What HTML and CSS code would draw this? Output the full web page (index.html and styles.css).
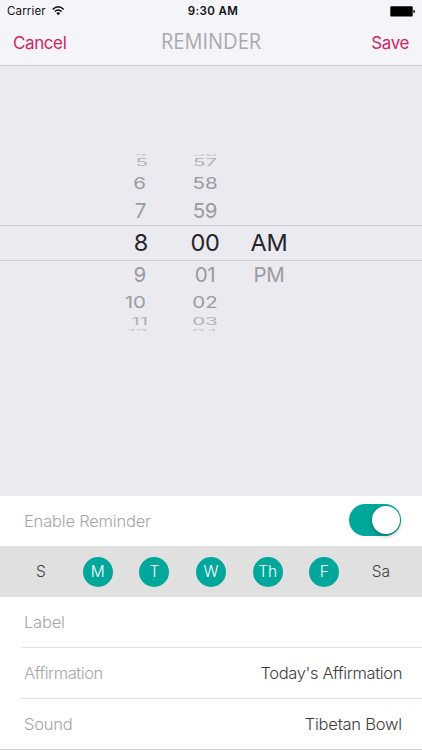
FILE: index.html
```html
<!DOCTYPE html>
<html lang="en">
<head>
  <meta charset="UTF-8">
  <title>Reminder</title>
  <link rel="stylesheet" href="styles.css">
</head>
<body>
  <div class="status-bar">
    <div class="carrier">
      <span>Carrier</span>
      <svg class="wifi" width="12.5" height="9.6" viewBox="0 0 13 10">
        <path d="M0.8 3.5Q6.5 -1.7 12.2 3.5M2.9 5.8Q6.5 2.6 10.1 5.8" fill="none" stroke="#000" stroke-width="1.5"/>
        <path d="M4.4 7.3Q6.5 5.6 8.6 7.3L6.5 9.6Z"/>
      </svg>
    </div>
    <div class="time">9:30 AM</div>
    <svg class="battery" width="26" height="11" viewBox="0 0 26 11">
      <rect x="0.3" y="0.3" width="22.4" height="10.2" rx="1"/>
      <path d="M23.5 3.8h0.5q1 0.5 1 1.6t-1 1.6h-0.5z"/>
    </svg>
  </div>

  <div class="nav-bar">
    <a class="nav-link cancel">Cancel</a>
    <h1 class="title"><span class="title-text">REMINDER</span></h1>
    <a class="nav-link save">Save</a>
  </div>

  <div class="picker">
    <div class="wheel hours">
      <span class="edge">4</span>
      <span class="far">5</span>
      <span class="mid">6</span>
      <span class="near">7</span>
      <span class="selected">8</span>
      <span class="near">9</span>
      <span class="mid">10</span>
      <span class="far">11</span>
      <span class="edge">12</span>
    </div>
    <div class="wheel minutes">
      <span class="edge">56</span>
      <span class="far">57</span>
      <span class="mid">58</span>
      <span class="near">59</span>
      <span class="selected">00</span>
      <span class="near">01</span>
      <span class="mid">02</span>
      <span class="far">03</span>
      <span class="edge">04</span>
    </div>
    <div class="wheel period">
      <span></span>
      <span></span>
      <span></span>
      <span></span>
      <span class="selected">AM</span>
      <span class="near">PM</span>
    </div>
    <div class="picker-band"></div>
  </div>

  <div class="row enable">
    <span class="label">Enable Reminder</span>
    <div class="switch"><div class="knob"></div></div>
  </div>

  <div class="days">
    <span class="day">S</span>
    <span class="day on">M</span>
    <span class="day on">T</span>
    <span class="day on">W</span>
    <span class="day on">Th</span>
    <span class="day on">F</span>
    <span class="day">Sa</span>
  </div>

  <div class="settings">
    <div class="row">
      <span class="label">Label</span>
    </div>
    <div class="row">
      <span class="label affirmation">Affirmation</span>
      <span class="value today">Today's Affirmation</span>
    </div>
    <div class="row">
      <span class="label">Sound</span>
      <span class="value">Tibetan Bowl</span>
    </div>
  </div>
</body>
</html>
```
FILE: styles.css
```css
* {
  box-sizing: border-box;
}
body {
  margin: 0;
  width: 422px;
  height: 750px;
  overflow: hidden;
  background: #fff;
  color: #3c3c3e;
  font-family: Inter, "Liberation Sans", sans-serif;
}
.status-bar {
  display: grid;
  grid-template-columns: 1fr auto 1fr;
  align-items: center;
  height: 22px;
  padding: 0 6px 0 7px;
  background: #f5f4f9;
  color: #111;
  font-size: 11.5px;
}
.carrier {
  display: flex;
  align-items: center;
  gap: 6px;
  letter-spacing: 0.15px;
}
.time {
  font-weight: 600;
  letter-spacing: 0.4px;
  margin-left: 3px;
}
.battery {
  justify-self: end;
}
.nav-bar {
  display: grid;
  grid-template-columns: 1fr auto 1fr;
  align-items: center;
  height: 44px;
  padding: 0 13px 2px;
  background: #f5f4f9;
  border-bottom: 1px solid #cbcad0;
}
.nav-link {
  color: #d02560;
  font-size: 17px;
  letter-spacing: -0.4px;
}
.save {
  justify-self: end;
}
.title {
  display: flex;
  justify-content: center;
  width: 100px;
  margin: 0 0 5px;
  font: 400 22px/36px "Open Sans", sans-serif;
  color: #a9a8ac;
}
.title-text {
  transform: scaleX(0.91);
}
.picker {
  position: relative;
  display: grid;
  grid-template-columns: 65px 64px 64px;
  height: 430px;
  padding: 84px 0 0 108px;
  background: #ebeaf0;
}
.picker-band {
  position: absolute;
  left: 0;
  right: 0;
  top: 159px;
  height: 36px;
  border-top: 1px solid #cfced3;
  border-bottom: 1px solid #cfced3;
}
.wheel {
  display: grid;
  grid-template-rows: 8px 10px 30px 26px 38px 26px 28px 11px 8px;
  align-content: start;
  justify-items: center;
  align-items: center;
  font-size: 20.5px;
  line-height: 26px;
  color: #9b9a9f;
}
.hours {
  justify-items: end;
  padding-right: 25px;
}
.hours span {
  transform-origin: right center;
}
.hours .near,
.hours .mid {
  margin-right: 2px;
}
.wheel .selected {
  font-size: 23.5px;
  letter-spacing: -0.3px;
  color: #252528;
}
.near {
  letter-spacing: -0.3px;
}
.mid {
  transform: scaleY(0.79);
}
.far {
  color: #b2b1b6;
  transform: scaleY(0.47);
}
.edge {
  color: #c6c5ca;
  transform: scaleY(0.22);
}
/* the outermost numbers roll out of sight halfway */
.edge:first-child {
  clip-path: inset(50% 0 0 0);
}
.edge:last-child {
  clip-path: inset(0 0 50% 0);
}
.row {
  display: flex;
  align-items: center;
  justify-content: space-between;
  height: 51px;
  font-size: 16.5px;
  font-weight: 300;
}
.enable {
  height: 50px;
  padding: 0 21px 0 24px;
}
.label {
  color: #a5a5a7;
  letter-spacing: -0.2px;
}
.affirmation {
  letter-spacing: -0.45px;
}
.switch {
  width: 52px;
  height: 32px;
  margin-top: -2px;
  padding: 2px;
  border-radius: 16px;
  background: #00a79a;
}
.knob {
  width: 28px;
  height: 28px;
  margin-left: 21px;
  border-radius: 50%;
  background: #fff;
  box-shadow: 0 2px 4px rgba(0, 0, 0, 0.3);
}
.days {
  display: flex;
  justify-content: space-between;
  align-items: center;
  height: 51px;
  padding: 0 26px;
  background: #e0e0e0;
  font-size: 15.5px;
  font-weight: 300;
}
.day {
  width: 30px;
  height: 30px;
  line-height: 30px;
  text-align: center;
}
.on {
  border-radius: 50%;
  background: #00a79a;
  color: #fff;
}
.settings .row {
  margin-left: 21px;
  padding: 0 20px 0 3px;
  border-bottom: 1px solid #e1e1e3;
}
.settings .row:last-child {
  margin-left: 0;
  padding-left: 24px;
  border-bottom-color: #cfcfd1;
}
.value {
  letter-spacing: -0.2px;
}
.today {
  letter-spacing: -0.37px;
}
```
